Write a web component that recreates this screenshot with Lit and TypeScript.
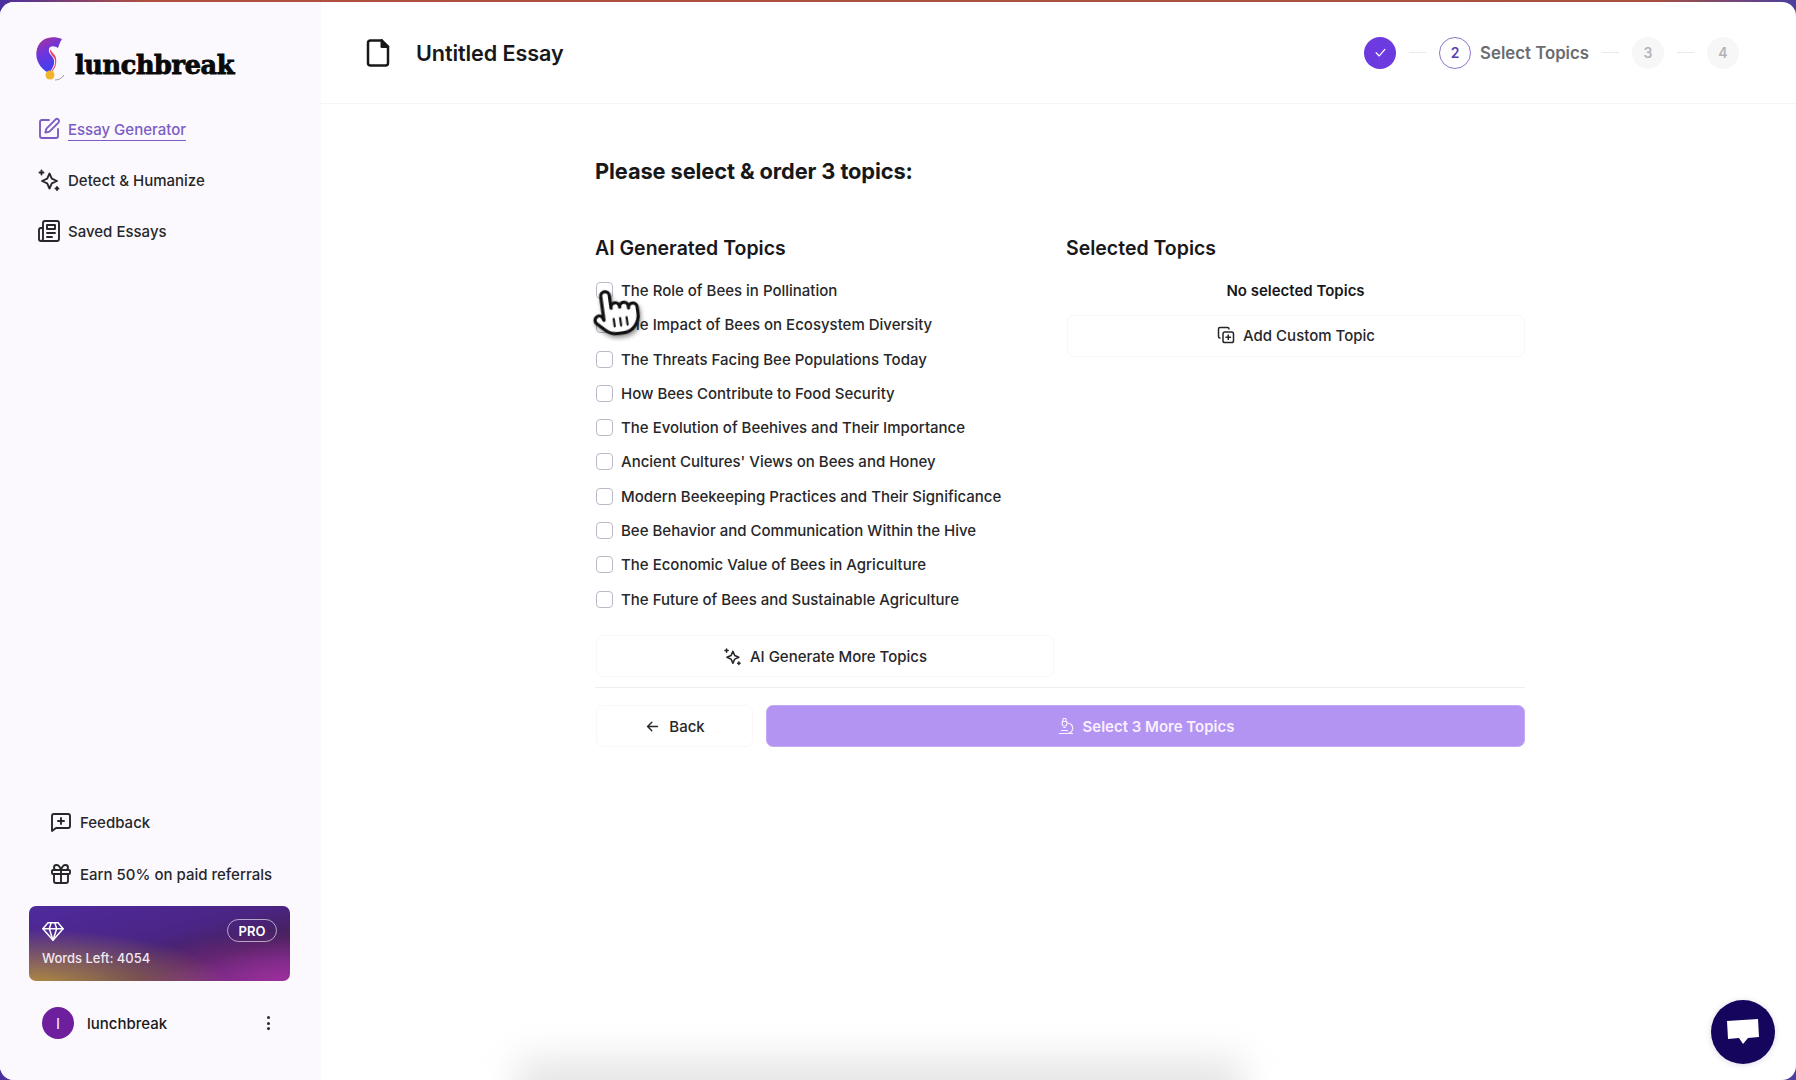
import {html, css, LitElement, svg} from 'lit';
import {customElement} from 'lit/decorators.js';

const icon = (body: any, size = 24, sw = 2) => html`<svg class="ico" width=${size} height=${size} viewBox="0 0 24 24" fill="none" stroke="currentColor" stroke-width=${sw} stroke-linecap="round" stroke-linejoin="round">${body}</svg>`;

const PEN = svg`<path d="M12 3H5a2 2 0 0 0-2 2v14a2 2 0 0 0 2 2h14a2 2 0 0 0 2-2v-7"/><path d="M18.400 2.600a2.100 2.100 0 0 1 3 3l-9 9-4 1 1-4z"/>`;
const SPARK = svg`<path d="M12.500 5.500l2.300 5.200 5.200 2.300-5.200 2.300-2.300 5.200-2.300-5.200L5 13l5.200-2.300z"/><path d="M4.500 2.500v4M2.500 4.500h4M20 19v3M18.500 20.500h3"/>`;
const NEWS = svg`<path d="M4 22h16a2 2 0 0 0 2-2V4a2 2 0 0 0-2-2H8a2 2 0 0 0-2 2v16a2 2 0 0 1-2 2Zm0 0a2 2 0 0 1-2-2v-9c0-1.100.900-2 2-2h2"/><path d="M18 14h-8M15 18h-5M10 6h8v4h-8z"/>`;
const FEEDBACK = svg`<path d="M3 21V6a2 2 0 0 1 2-2h14a2 2 0 0 1 2 2v10a2 2 0 0 1-2 2H7z"/><path d="M12 8v6M9 11h6"/>`;
const GIFT = svg`<rect x="3" y="8" width="18" height="4" rx="1"/><path d="M12 8v13M19 12v7a2 2 0 0 1-2 2H7a2 2 0 0 1-2-2v-7M7.500 8a2.500 2.500 0 0 1 0-5C10.500 3 12 8 12 8s1.500-5 4.500-5a2.500 2.500 0 0 1 0 5"/>`;
const DIAMOND = svg`<path d="M6.500 3h11L23 9.500 12 22 1 9.500z"/><path d="M1 9.500h22M8 9.500 12 22l4-12.500M8 9.500 10 3M16 9.500 14 3"/>`;
const COPY = svg`<rect x="8" y="8" width="14" height="14" rx="2.500"/><path d="M4 16a2 2 0 0 1-2-2V4a2 2 0 0 1 2-2h10a2 2 0 0 1 2 2M15 12v6M12 15h6"/>`;
const SCOPE = svg`<path d="M6 18h8M3 22h18M14 22a7 7 0 1 0 0-14h-1M9 14h2M9 12a2 2 0 0 1-2-2V6h6v4a2 2 0 0 1-2 2ZM12 6V3a1 1 0 0 0-1-1H9a1 1 0 0 0-1 1v3"/>`;
const FILE = svg`<path d="M15 2H6a2 2 0 0 0-2 2v16a2 2 0 0 0 2 2h12a2 2 0 0 0 2-2V7z"/><path d="M15 2v5h5" fill="currentColor"/>`;

const TOPICS = [
  'The Role of Bees in Pollination',
  'The Impact of Bees on Ecosystem Diversity',
  'The Threats Facing Bee Populations Today',
  'How Bees Contribute to Food Security',
  'The Evolution of Beehives and Their Importance',
  "Ancient Cultures' Views on Bees and Honey",
  'Modern Beekeeping Practices and Their Significance',
  'Bee Behavior and Communication Within the Hive',
  'The Economic Value of Bees in Agriculture',
  'The Future of Bees and Sustainable Agriculture',
];

@customElement('app-root')
export class AppRoot extends LitElement {
  static styles = css`
    :host {
      display: block;
      position: relative;
      height: 100vh;
      overflow: hidden;
      background: linear-gradient(90deg, #4a2fa0, #b0503f 8%, #a8503f 92%, #4a3fa0);
      font-family: Inter, "Liberation Sans", sans-serif;
      color: #18181b;
    }
    * { box-sizing: border-box; }
    .ico { flex: none; display: block; }
    .frame {
      position: absolute;
      inset: 2px 0 0 0;
      display: flex;
      overflow: hidden;
      border-radius: 14px;
      background: #fff;
    }

    /* sidebar */
    .side {
      width: 321px;
      flex: none;
      display: flex;
      flex-direction: column;
      background: #fbf9fe;
      padding: 34px 31px 0 29px;
    }
    .logo {
      display: flex;
      align-items: flex-end;
      gap: 8px;
      margin-left: 6px;
      height: 46px;
    }
    .logo span {
      font-family: "DejaVu Serif", "Liberation Serif", serif;
      font-weight: 700;
      font-size: 25.5px;
      letter-spacing: -0.35px;
      line-height: 32px;
      color: #0a0a0a;
      -webkit-text-stroke: 0.9px #0a0a0a;
      margin-bottom: 1px;
    }
    nav { display: flex; flex-direction: column; gap: 23px; margin-top: 33px; margin-left: 8px; }
    .nav {
      display: flex;
      align-items: center;
      gap: 7px;
      height: 28px;
      font-size: 15px;
      font-weight: 500;
      color: #27272a;
    }
    .nav.on { color: #7c5cc4; }
    .nav.on span { border-bottom: 1.5px solid #7c5cc4; line-height: 20px; padding-top: 3px; }
    .grow { flex: 1; }
    .links { display: flex; flex-direction: column; gap: 24px; margin-left: 20px; }
    .card {
      margin-top: 18px;
      height: 75px;
      border-radius: 7px;
      padding: 13px 13px 0 13px;
      color: #fff;
      background:
        radial-gradient(ellipse 200px 58px at 0% 108%, #b5913f 0%, rgba(181,145,63,0) 100%),
        radial-gradient(ellipse 170px 50px at 100% 100%, #9c2f9c 0%, rgba(156,47,156,0) 100%),
        linear-gradient(165deg, #4f2a9e 0%, #4b2584 45%, #45205a 70%, #6a2a80 100%);
    }
    .card .row { display: flex; justify-content: space-between; align-items: center; }
    .pro {
      width: 50px;
      height: 23px;
      border: 1px solid rgba(255,255,255,.6);
      border-radius: 12px;
      display: flex;
      align-items: center;
      justify-content: center;
      font-size: 13px;
      font-weight: 600;
    }
    .words { font-size: 13px; font-weight: 500; color: #f1e9f2; margin-top: 8px; }
    .user {
      display: flex;
      align-items: center;
      margin: 26px 0 41px 13px;
      height: 32px;
      font-size: 15px;
      font-weight: 500;
    }
    .avatar {
      width: 32px;
      height: 32px;
      border-radius: 50%;
      background: #6d1f9e;
      color: #efe6f5;
      font-size: 14px;
      display: flex;
      align-items: center;
      justify-content: center;
      margin-right: 13px;
    }
    .dots { margin-left: auto; margin-right: 20px; display: flex; flex-direction: column; gap: 2.5px; }
    .dots i { width: 3px; height: 3px; border-radius: 50%; background: #27272a; display: block; }

    /* main */
    .main { flex: 1; display: flex; flex-direction: column; min-width: 0; }
    .top {
      height: 102px;
      flex: none;
      border-bottom: 1px solid #f5f5f6;
      display: flex;
      align-items: center;
      padding: 0 57px 0 42px;
    }
    .top .ttl { margin-left: 23px; font-size: 21.6px; font-weight: 600; letter-spacing: -0.1px; }
    .steps { margin-left: auto; display: flex; align-items: center; }
    .dot {
      width: 32px;
      height: 32px;
      border-radius: 50%;
      display: flex;
      align-items: center;
      justify-content: center;
      font-size: 14px;
      font-weight: 600;
    }
    .dot.done { background: #6d3ae0; color: #fff; }
    .dot.cur { border: 1px solid #8d78c8; color: #5a3fb0; }
    .dot.todo { background: #f7f7f8; color: #b4b4b8; }
    .dash { width: 17px; height: 1px; background: #e9e9eb; margin: 0 13px; }
    .steplabel { margin-left: 9px; font-size: 16.8px; font-weight: 600; color: #6b6b70; }

    .body { padding: 53px 0 0 274px; width: 1204px; }
    h1 { margin: 0; font-size: 21.8px; line-height: 28px; font-weight: 700; letter-spacing: -0.1px; }
    .cols { display: grid; grid-template-columns: 459px 459px; gap: 12px; margin-top: 51px; }
    h2 { margin: 0; font-size: 19.5px; line-height: 24px; font-weight: 600; }
    .list { display: flex; flex-direction: column; gap: 10.3px; margin-top: 18.5px; }
    .item { display: flex; align-items: center; height: 24px; font-size: 15px; font-weight: 500; color: #27272a; }
    .box {
      width: 17px;
      height: 17px;
      margin: 0 8px 0 1px;
      border: 1.5px solid #bdb8c9;
      border-radius: 4px;
      background: #fff;
    }
    .btn {
      height: 42px;
      display: flex;
      align-items: center;
      justify-content: center;
      gap: 8px;
      background: #fff;
      border: 1px solid #f8f8f9;
      border-radius: 7px;
      font-size: 15px;
      font-weight: 500;
      color: #27272a;
      margin-left: 1px;
    }
    .gen { margin-top: 24px; }
    .none { margin-top: 19px; height: 24px; line-height: 24px; text-align: center; font-size: 15px; font-weight: 600; }
    .custom { margin-top: 12px; width: 458px; padding-bottom: 2px; }
    hr { border: 0; border-top: 1px solid #efeff0; margin: 10px 0 0; width: 930px; }
    .actions { display: flex; gap: 13px; margin-top: 17px; width: 930px; }
    .back { width: 157px; }
    .next { flex: 1; background: #b494f2; border-color: #c4aaf5; color: #f8f0ff; margin-left: 0; font-weight: 600; }

    /* things lying over the page */
    .hand { position: absolute; left: 590px; top: 286px; transform: rotate(-8deg); filter: drop-shadow(1px 3px 2px rgba(0,0,0,.4)); }
    .glow {
      position: absolute;
      left: 540px;
      bottom: -30px;
      width: 680px;
      height: 30px;
      background: #ddd;
      box-shadow: 0 0 36px 22px rgba(222,222,222,.75);
    }
    .chat {
      position: absolute;
      left: 1711px;
      top: 1000px;
      width: 64px;
      height: 64px;
      border-radius: 50%;
      background: #15055c;
      display: flex;
      align-items: center;
      justify-content: center;
      box-shadow: 0 1px 6px rgba(21,5,92,.15);
    }
  `;

  render() {
    return html`
      <div class="frame">
        <aside class="side">
          <div class="logo">
            <svg width="32" height="46" viewBox="0 0 32 46">
              <defs>
                <linearGradient id="fe" x1="0.2" y1="0" x2="0.6" y2="1">
                  <stop offset="0" stop-color="#a5339c"/>
                  <stop offset=".45" stop-color="#6a35e0"/>
                  <stop offset="1" stop-color="#3c42f0"/>
                </linearGradient>
              </defs>
              <path d="M27 3C18-1 5 1 2 13-1 24 6 33 14 37c3-4 6-8 5-13-1-4-6-6-5-11 1-4 6-3 9-1 1-3 2-6 4-9z" fill="url(#fe)"/>
              <path d="M15 13c-1 5 4 7 5 11 1 5-2 9-5 13 5-3 7-9 6-15-1-4-5-6-6-9z" fill="#e4405f"/>
              <circle cx="15" cy="39" r="4.500" fill="#f0b429"/>
              <path d="M20 44c4 0 7-2 9-5" stroke="#9a9a9a" stroke-width="1" fill="none"/>
            </svg>
            <span>lunchbreak</span>
          </div>
          <nav>
            <div class="nav on">${icon(PEN, 24, 1.9)}<span>Essay Generator</span></div>
            <div class="nav">${icon(SPARK, 24, 1.9)}<span>Detect &amp; Humanize</span></div>
            <div class="nav">${icon(NEWS, 24, 1.9)}<span>Saved Essays</span></div>
          </nav>
          <div class="grow"></div>
          <div class="links">
            <div class="nav">${icon(FEEDBACK, 24, 1.9)}<span>Feedback</span></div>
            <div class="nav">${icon(GIFT, 24, 1.9)}<span>Earn 50% on paid referrals</span></div>
          </div>
          <div class="card">
            <div class="row">${icon(DIAMOND, 22, 1.6)}<div class="pro">PRO</div></div>
            <div class="words">Words Left: 4054</div>
          </div>
          <div class="user">
            <div class="avatar">l</div>
            <span>lunchbreak</span>
            <div class="dots"><i></i><i></i><i></i></div>
          </div>
        </aside>

        <main class="main">
          <header class="top">
            ${icon(FILE, 30, 2)}
            <div class="ttl">Untitled Essay</div>
            <div class="steps">
              <div class="dot done">${icon(svg`<path d="M5 12.500l5 5L19 7"/>`, 15, 2)}</div>
              <div class="dash"></div>
              <div class="dot cur">2</div>
              <div class="steplabel">Select Topics</div>
              <div class="dash"></div>
              <div class="dot todo">3</div>
              <div class="dash"></div>
              <div class="dot todo">4</div>
            </div>
          </header>
          <section class="body">
            <h1>Please select &amp; order 3 topics:</h1>
            <div class="cols">
              <div>
                <h2>AI Generated Topics</h2>
                <div class="list">
                  ${TOPICS.map((t) => html`<div class="item"><div class="box"></div>${t}</div>`)}
                </div>
                <div class="btn gen">${icon(SPARK, 19)}AI Generate More Topics</div>
              </div>
              <div>
                <h2>Selected Topics</h2>
                <div class="none">No selected Topics</div>
                <div class="btn custom">${icon(COPY, 18)}Add Custom Topic</div>
              </div>
            </div>
            <hr />
            <div class="actions">
              <div class="btn back">${icon(svg`<path d="M19 12H5M11 6l-6 6 6 6"/>`, 17)}Back</div>
              <div class="btn next">${icon(SCOPE, 18, 1.6)}Select 3 More Topics</div>
            </div>
          </section>
        </main>
      </div>

      <div class="glow"></div>
      <svg class="hand" width="52" height="52" viewBox="0 0 24 24" fill="#fff" stroke="#111" stroke-width="1.500" stroke-linejoin="round" stroke-linecap="round">
        <path d="M6 15V4a2 2 0 0 1 4 0v6a2 2 0 0 1 4-.500V10a2 2 0 0 1 4 0v1a2 2 0 0 1 4 0v3a8 8 0 0 1-8 8h-2c-2.800 0-4.500-.860-6-2.340l-3.600-3.600a2 2 0 0 1 2.830-2.820z"/>
        <path d="M10.500 15v3.500M13.500 15v3.500M16.500 15v3.500" stroke-width="1"/>
      </svg>
      <div class="chat">
        <svg width="32" height="28" viewBox="0 0 32 28"><path d="M0 3 31 1l1 18-11 1-5 6-4-6-11 1z" fill="#fff"/></svg>
      </div>
    `;
  }
}
